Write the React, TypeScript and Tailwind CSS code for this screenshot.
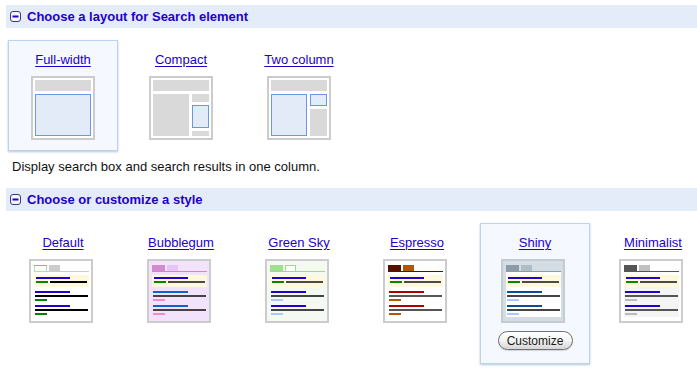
import React from 'react'

type Layout = { name: string; selected?: boolean; kind: 'full' | 'compact' | 'two' }

type Look = {
  name: string
  selected?: boolean
  bg: string
  tab1: string
  tab2: string
  line: string
  title: string
  snippet: string
  url: string
  topSnippet: string
  variant?: 'default' | 'green' | 'shiny' | 'minimal'
}

const layouts: Layout[] = [
  { name: 'Full-width', selected: true, kind: 'full' },
  { name: 'Compact', kind: 'compact' },
  { name: 'Two column', kind: 'two' },
]

const looks: Look[] = [
  { name: 'Default', bg: '#ffffff', tab1: '#ffffff', tab2: '#cccccc', line: '#cccccc', title: '#2200cc', snippet: '#000000', url: '#008000', topSnippet: '#000000', variant: 'default' },
  { name: 'Bubblegum', bg: '#f3e2fc', tab1: '#d48ace', tab2: '#e6c6f6', line: '#d088cc', title: '#0f63cc', snippet: '#444444', url: '#f28cc6', topSnippet: '#4a4a4a' },
  { name: 'Green Sky', bg: '#f4f9f2', tab1: '#9fe08f', tab2: '#ffffff', line: '#99dd88', title: '#2200cc', snippet: '#444444', url: '#a9c8ff', topSnippet: '#4a4a4a', variant: 'green' },
  { name: 'Espresso', bg: '#ffffff', tab1: '#551100', tab2: '#b05a00', line: '#551100', title: '#aa0000', snippet: '#555555', url: '#b05a00', topSnippet: '#4a4a4a' },
  { name: 'Shiny', selected: true, bg: '#d5dde4', tab1: '#8b9ba8', tab2: '#afbdc6', line: '#8b9ba8', title: '#0c4b9e', snippet: '#444444', url: '#a9c8ff', topSnippet: '#4a4a4a', variant: 'shiny' },
  { name: 'Minimalist', bg: '#ffffff', tab1: '#555555', tab2: '#c0c0c0', line: '#555555', title: '#2200cc', snippet: '#555555', url: '#bbbbbb', topSnippet: '#4a4a4a', variant: 'minimal' },
]

function MinusIcon() {
  return (
    <svg width="11" height="11" viewBox="0 0 11 11" className="shrink-0">
      <rect x="0.5" y="0.5" width="10" height="10" rx="2.5" fill="#f4f6fb" stroke="#3a3a7a" />
      <rect x="2.5" y="4.5" width="6" height="2" fill="#2200cc" />
    </svg>
  )
}

function SectionHeader({ title }: { title: string }) {
  return (
    <div className="ml-[6px] flex h-[23px] items-center bg-[#e5ecf9] pl-[4px]">
      <MinusIcon />
      <span className="ml-[6px] text-[13px] font-bold leading-[15px] text-[#2200cc]">{title}</span>
    </div>
  )
}

function LayoutThumb({ kind }: { kind: Layout['kind'] }) {
  const gray = '#d9d9d9'
  const blueFill = '#e3eaf8'
  const blueLine = '#6a98e6'
  return (
    <svg width="64" height="64" viewBox="0 0 64 64" className="block">
      <rect x="1" y="1" width="62" height="62" fill="#ffffff" stroke="#cccccc" strokeWidth="2" />
      <rect x="4" y="4" width="56" height="11" fill={gray} />
      {kind === 'full' && (
        <rect x="4.5" y="18.5" width="55" height="41" fill={blueFill} stroke={blueLine} />
      )}
      {kind === 'compact' && (
        <>
          <rect x="4" y="18" width="36" height="42" fill={gray} />
          <rect x="43" y="18" width="17" height="8" fill={gray} />
          <rect x="43.5" y="29.5" width="16" height="22" fill={blueFill} stroke={blueLine} />
          <rect x="43" y="55" width="17" height="5" fill={gray} />
        </>
      )}
      {kind === 'two' && (
        <>
          <rect x="4.5" y="18.5" width="35" height="41" fill={blueFill} stroke={blueLine} />
          <rect x="43.5" y="18.5" width="16" height="11" fill={blueFill} stroke={blueLine} />
          <rect x="43" y="33" width="17" height="27" fill={gray} />
        </>
      )}
    </svg>
  )
}

function StyleThumb({ look }: { look: Look }) {
  const v = look.variant
  return (
    <svg width="64" height="64" viewBox="0 0 64 64" className="mr-1 block">
      <rect x="1" y="1" width="62" height="62" fill={look.bg} stroke={v === 'shiny' ? '#c4cbd2' : '#cccccc'} strokeWidth="2" />
      {v === 'shiny' && <rect x="5" y="13" width="55" height="45" fill="#ffffff" />}
      {v === 'minimal' && <rect x="5" y="28" width="55" height="30" fill="#f4f4f4" />}

      {/* tabs */}
      {v === 'default' ? (
        <>
          <rect x="5.5" y="6.5" width="12" height="6" fill="#ffffff" stroke="#cccccc" />
          <rect x="5" y="6" width="13" height="1" fill="#ff9900" />
        </>
      ) : (
        <rect x="5" y="6" width="13" height="6" fill={look.tab1} />
      )}
      {v === 'green' ? (
        <rect x="20.5" y="6.5" width="10" height="6" fill="#ffffff" stroke="#99dd88" />
      ) : (
        <rect x="20" y="6" width="11" height="6" fill={look.tab2} />
      )}
      <rect x="5" y="12" width="55" height="1" fill={look.line} />

      {/* highlighted top result */}
      <rect x="5" y="16" width="55" height="12" fill="#fef8dc" />
      <rect x="7" y="18" width="34" height="2" fill="#2200cc" />
      <rect x="7" y="22" width="12" height="2" fill="#008800" />
      <rect x="21" y="22" width="37" height="2" fill={look.topSnippet} />

      {[32, 46].map(y => (
        <g key={y}>
          <rect x="6" y={y} width="35" height="2" fill={look.title} />
          <rect x="6" y={y + 4} width="53" height="2" fill={look.snippet} />
          <rect x="6" y={y + 8} width="12" height="2" fill={look.url} />
        </g>
      ))}
    </svg>
  )
}

function Option({ name, selected, children }: { name: string; selected?: boolean; children: React.ReactNode }) {
  return (
    <div
      className={
        selected
          ? 'flex w-[110px] shrink-0 flex-col items-center border border-[#bcd3ee] bg-[#f5f8ff] pt-[11px] shadow-[0_1px_2px_rgba(110,150,205,0.55)]'
          : 'flex w-[110px] shrink-0 flex-col items-center border border-transparent pt-[11px]'
      }
    >
      <a href="#" className="text-[13px] leading-[15px] text-[#2200cc] underline underline-offset-[2px]">
        {name}
      </a>
      <div className="mt-[9px] flex flex-col items-center">{children}</div>
    </div>
  )
}

export default function App() {
  return (
    <div className="h-[372px] w-[697px] overflow-hidden bg-white pt-[5px] font-['Liberation_Sans',Arial,sans-serif] text-black">
      <SectionHeader title="Choose a layout for Search element" />

      <div className="ml-2 mt-3 flex items-start gap-2">
        {layouts.map(l => (
          <Option key={l.name} name={l.name} selected={l.selected}>
            <LayoutThumb kind={l.kind} />
            <div className="h-[10px]" />
          </Option>
        ))}
      </div>

      <p className="ml-3 mt-[8px] text-[13px] leading-[15px] text-[#111]">
        Display search box and search results in one column.
      </p>

      <div className="mt-[14px]">
        <SectionHeader title="Choose or customize a style" />
      </div>

      <div className="ml-2 mt-3 flex items-start gap-2">
        {looks.map(s => (
          <Option key={s.name} name={s.name} selected={s.selected}>
            <StyleThumb look={s} />
            {s.selected && (
              <>
                <button className="mt-2 flex h-[19px] w-[75px] items-center justify-center rounded-full border border-[#707070] bg-gradient-to-b from-white via-[#f4f4f4] to-[#d6d6d6] text-[12px] leading-none text-[#1a1a1a] shadow-[0_1px_1px_rgba(0,0,0,0.15)]">
                  Customize
                </button>
                <div className="h-[13px]" />
              </>
            )}
          </Option>
        ))}
      </div>
    </div>
  )
}
